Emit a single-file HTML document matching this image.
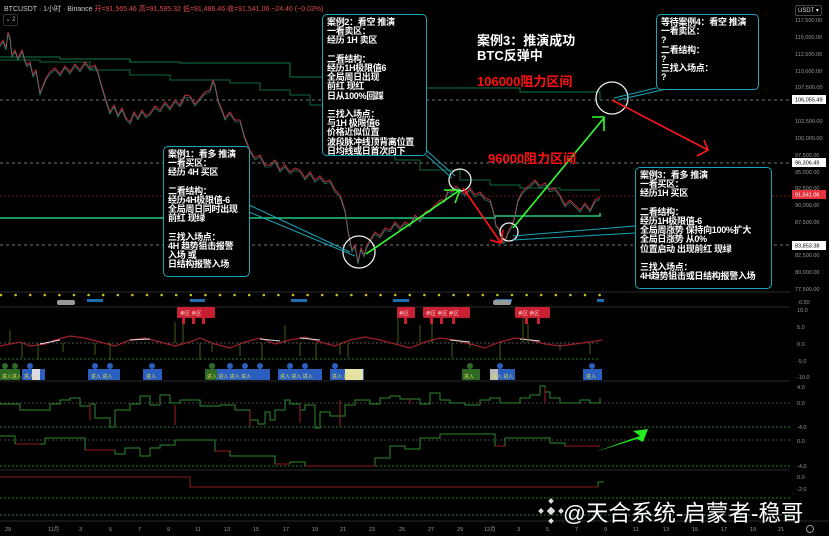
<!DOCTYPE html>
<html><head><meta charset="utf-8">
<style>
html,body{margin:0;padding:0;background:#000;}
body{width:829px;height:536px;overflow:hidden;position:relative;font-family:"Liberation Sans","Noto Sans CJK SC",sans-serif;}
svg{position:absolute;left:0;top:0;}
.box{position:absolute;border:1.5px solid #1aa6b7;border-radius:5px;color:#fff;font-weight:bold;font-size:9px;line-height:9.2px;padding:3px 4px;box-sizing:border-box;background:#000;white-space:nowrap;letter-spacing:-0.3px;overflow:hidden;}
.t{position:absolute;font-weight:bold;white-space:nowrap;}
</style></head><body>
<svg width="829" height="536" viewBox="0 0 829 536" font-family="Liberation Sans, Noto Sans CJK SC, sans-serif">
<g fill="none">
<path d="M0 292H790M0 307H790M0 381H790M0 470H790M0 521H829" stroke="#2a2a2a"/>
<path d="M0 100H790M0 163H790M0 245H790" stroke="#777" stroke-dasharray="3 3"/>
<path d="M0 196H790" stroke="#6a1a1a" stroke-dasharray="2 2"/>
<path d="M0 57H60V59H130V62H180V63H290V77H395V88H520V92H600V100" stroke="#0c7a4a"/>
<path d="M0 60H40V62H90V70H130V75H170V80H230V83H260V90H290V95H310V105H330V115H345V130H360V140H375V150H395V160H420V170H460V180H490V185H520V188H560V190H600V190" stroke="#0c6a40"/>
<path d="M0 218H495V216H600V213" stroke="#22c978" stroke-width="1.6"/>
<path d="M0 45L3 40L6 48L8 32L10 38L12 55L15 50L18 58L22 50L25 60L27 65L30 62L33 75L36 70L40 93L43 85L46 78L50 72L55 68L60 74L65 66L70 72L75 64L80 70L85 62L90 68L95 65L98 72L100 80L103 90L106 100L110 112L114 105L118 115L122 108L126 118L130 122L134 112L138 118L142 110L146 116L150 113L155 106L160 110L165 102L170 108L175 100L180 105L185 95L190 96L195 104L200 98L205 92L210 90L213 80L215 85L218 100L222 110L225 118L230 112L235 120L240 120L244 135L248 145L250 150L255 158L260 155L265 165L270 165L275 160L280 170L285 165L290 172L295 168L300 170L305 178L310 172L315 180L320 176L325 182L330 180L335 190L340 195L345 210L348 230L352 250L355 245L358 262L361 248L364 255L367 245L370 240L375 232L380 236L385 228L390 230L395 222L400 228L405 222L410 225L415 215L420 220L425 212L430 210L435 205L440 200L445 200L448 190L452 192L456 186L460 190L465 194L470 188L475 195L480 192L485 198L490 200L493 210L496 225L500 230L503 242L505 240L508 232L512 225L515 215L518 200L522 192L526 188L530 185L535 180L540 186L545 183L550 190L555 188L560 195L565 205L570 200L575 205L580 210L585 203L590 210L595 200L600 197" stroke="#c02838" stroke-width="1"/>
<path d="M0 47L3 42L6 50L8 34L10 40L12 57L15 52L18 60L22 52L25 62L27 67L30 64L33 77L36 72L40 95L43 87L46 80L50 74L55 70L60 76L65 68L70 74L75 66L80 72L85 64L90 70L95 67L98 74L100 82L103 92L106 102L110 114L114 107L118 117L122 110L126 120L130 124L134 114L138 120L142 112L146 118L150 115L155 108L160 112L165 104L170 110L175 102L180 107L185 97L190 98L195 106L200 100L205 94L210 92L213 82L215 87L218 102L222 112L225 120L230 114L235 122L240 122L244 137L248 147L250 152L255 160L260 157L265 167L270 167L275 162L280 172L285 167L290 174L295 170L300 172L305 180L310 174L315 182L320 178L325 184L330 182L335 192L340 197L345 212L348 232L352 252L355 247L358 264L361 250L364 257L367 247L370 242L375 234L380 238L385 230L390 232L395 224L400 230L405 224L410 227L415 217L420 222L425 214L430 212L435 207L440 202L445 202L448 192L452 194L456 188L460 192L465 196L470 190L475 197L480 194L485 200L490 202L493 212L496 227L500 232L503 244L505 242L508 234L512 227L515 217L518 202L522 194L526 190L530 187L535 182L540 188L545 185L550 192L555 190L560 197L565 207L570 202L575 207L580 212L585 205L590 212L595 202L600 199" stroke="#1f9c8c" stroke-width="0.6"/>
<circle cx="359" cy="252" r="16" stroke="#eee" stroke-width="1.3"/><circle cx="460" cy="180" r="11" stroke="#eee" stroke-width="1.3"/><circle cx="509" cy="232" r="9" stroke="#eee" stroke-width="1.3"/><circle cx="612" cy="98" r="16" stroke="#eee" stroke-width="1.3"/>
<path d="M366 254L460 190M444 190L460 190L455 203M513 228L604 118M592 117L604 117L604 131" stroke="#33ff33" stroke-width="1.6"/>
<path d="M463 188L501 243M490 240L501 243L503 230M612 100L708 150M697 156L708 150L704 140" stroke="#ff1818" stroke-width="1.6"/>
<path d="M249 205L350 252M249 212L355 256M426 150L455 176M426 155L452 178M635 233L513 240M635 226L513 236M656 88L614 98M662 90L618 100" stroke="#1aa6b7"/>
</g>
<g font-size="5.5" fill="#999">
<text x="795" y="22">117,500.00</text><text x="795" y="39">115,000.00</text><text x="795" y="56">112,500.00</text><text x="795" y="73">110,000.00</text><text x="795" y="89">107,500.00</text><text x="795" y="123">102,500.00</text><text x="795" y="140">100,000.00</text><text x="795" y="157">97,500.00</text><text x="795" y="174">95,000.00</text><text x="795" y="190">92,500.00</text><text x="795" y="207">90,000.00</text><text x="795" y="224">87,500.00</text><text x="795" y="257">82,500.00</text><text x="795" y="274">80,000.00</text><text x="795" y="291">77,500.00</text>
</g>
<rect x="792" y="95" width="34" height="9" fill="#fff"/><text x="795" y="101.5" font-size="5.5" fill="#000">106,055.49</text>
<rect x="792" y="158" width="34" height="9" fill="#fff"/><text x="795" y="164.5" font-size="5.5" fill="#000">96,306.49</text>
<rect x="792" y="190" width="34" height="9" fill="#e5323f"/><text x="795" y="196.5" font-size="5.5" fill="#fff">91,541.06</text>
<rect x="792" y="241" width="34" height="9" fill="#fff"/><text x="795" y="247.5" font-size="5.5" fill="#000">83,853.38</text>
<path d="M1 295h0M15.6 295h0M30.2 295h0M44.8 295h0M59.4 295h0M74 295h0M88.6 295h0M103.2 295h0M117.8 295h0M132.4 295h0M147 295h0M161.6 295h0M176.2 295h0M190.8 295h0M205.4 295h0M220 295h0M234.6 295h0M249.2 295h0M263.8 295h0M278.4 295h0M293 295h0M307.6 295h0M322.2 295h0M336.8 295h0M351.4 295h0M366 295h0M380.6 295h0M395.2 295h0M409.8 295h0M424.4 295h0M439 295h0M453.6 295h0M468.2 295h0M482.8 295h0M497.4 295h0M512 295h0M526.6 295h0M541.2 295h0M555.8 295h0M570.4 295h0M585 295h0M599.6 295h0" stroke="#c8c020" stroke-width="2.6" stroke-linecap="round"/>
<g fill="#1d6fb0"><rect x="87" y="299" width="16" height="3"/><rect x="190" y="299" width="15" height="3"/><rect x="291" y="299" width="16" height="3"/><rect x="393" y="299" width="16" height="3"/><rect x="495" y="299" width="17" height="3"/><rect x="597" y="299" width="7" height="3"/></g>
<rect x="57" y="300" width="18" height="5" rx="2" fill="#999"/><rect x="493" y="300" width="18" height="5" rx="2" fill="#999"/>
<text x="797" y="304" font-size="5.5" fill="#999">-0.50</text>
<path d="M0 343H600" stroke="#555" stroke-dasharray="2 2"/><path d="M0 359H600" stroke="#2a7a2a" stroke-dasharray="2 2"/>
<path d="M0 346L20 342L30 346L45 344L55 340L70 336L85 338L100 342L115 346L130 340L145 338L160 342L175 346L190 342L200 338L215 344L230 348L245 342L260 338L275 344L290 340L305 337L320 342L335 346L350 340L365 337L380 340L395 344L410 348L425 342L440 338L455 340L470 344L485 348L500 342L515 338L530 340L545 344L560 346L575 344L590 342L602 340" stroke="#a02028" stroke-width="1.2" fill="none"/>
<path d="M40 344L60 340M130 340L150 339M260 339L280 341M300 338L320 340M450 340L470 342M520 339L540 341" stroke="#ddd" stroke-width="1"/>
<path d="M10 343V330M22 343V358M38 343V360M63 343V352M95 343V355M110 343V360M175 343V322M183 343V316M200 343V360M212 343V352M240 343V356M262 343V360M285 343V325M300 343V356M316 343V360M340 343V355M348 343V358M398 343V316M420 343V325M432 343V318M452 343V358M470 343V348M500 343V360M523 343V318M528 343V324M560 343V350M590 343V354" stroke="#4a6a18" stroke-width="0.9"/>
<g fill="#c82030"><rect x="177" y="307" width="38" height="11" rx="1"/><rect x="397" y="307" width="18" height="11" rx="1"/><rect x="423" y="307" width="47" height="11" rx="1"/><rect x="515" y="307" width="35" height="11" rx="1"/>
<rect x="182" y="318" width="3" height="6"/><rect x="192" y="318" width="3" height="6"/><rect x="202" y="318" width="3" height="6"/><rect x="404" y="318" width="3" height="6"/><rect x="430" y="318" width="3" height="6"/><rect x="440" y="318" width="3" height="6"/><rect x="452" y="318" width="3" height="6"/><rect x="525" y="318" width="3" height="6"/><rect x="537" y="318" width="3" height="6"/></g>
<g font-size="5" fill="#fcc"><text x="180" y="315">卖区 卖区</text><text x="399" y="315">卖区</text><text x="426" y="315">卖区 卖区 卖区</text><text x="518" y="315">卖区 卖区</text></g>
<g fill="#2a5fc0"><rect x="22" y="369" width="23" height="11"/><rect x="88" y="369" width="32" height="11"/><rect x="143" y="369" width="19" height="11"/><rect x="205" y="369" width="65" height="11"/><rect x="278" y="369" width="44" height="11"/><rect x="330" y="369" width="34" height="11"/><rect x="490" y="369" width="25" height="11"/><rect x="583" y="369" width="19" height="11"/>
<circle cx="30" cy="366" r="3"/><circle cx="95" cy="366" r="3"/><circle cx="110" cy="366" r="3"/><circle cx="152" cy="366" r="3"/><circle cx="212" cy="366" r="3"/><circle cx="230" cy="366" r="3"/><circle cx="245" cy="366" r="3"/><circle cx="260" cy="366" r="3"/><circle cx="290" cy="366" r="3"/><circle cx="305" cy="366" r="3"/><circle cx="335" cy="366" r="3"/><circle cx="500" cy="366" r="3"/><circle cx="592" cy="366" r="3"/></g>
<g fill="#2e6a24"><rect x="0" y="369" width="20" height="11"/><rect x="462" y="369" width="18" height="11"/><rect x="205" y="369" width="12" height="11"/><circle cx="5" cy="366" r="3"/><circle cx="15" cy="366" r="3"/><circle cx="470" cy="366" r="3"/><circle cx="212" cy="366" r="3"/></g>
<rect x="32" y="369" width="8" height="11" fill="#ddd"/><rect x="345" y="369" width="18" height="11" fill="#e8e4a8"/><rect x="490" y="369" width="8" height="11" fill="#bbb"/>
<g font-size="5" fill="#dd5"><text x="2" y="378">进入进入</text><text x="24" y="378">进入</text><text x="91" y="378">进入 进入</text><text x="146" y="378">进入</text><text x="207" y="378">进入 进入 进入 进入</text><text x="280" y="378">进入 进入 进入</text><text x="332" y="378">进入 进入</text><text x="464" y="378">进入</text><text x="492" y="378">进入 进入</text><text x="586" y="378">进入</text></g>
<g font-size="5.5" fill="#999"><text x="797" y="312">10.0</text><text x="797" y="329">5.0</text><text x="797" y="346">0.0</text><text x="797" y="363">-5.0</text><text x="797" y="379">-10.0</text></g>
<path d="M0 403H790M0 440H790" stroke="#444" stroke-dasharray="2 2"/><path d="M0 427H790M0 466H790" stroke="#2a7a2a" stroke-dasharray="2 2"/>
<path d="M0 404H20V410H50V404H60V400H70V398H80V406H90V404H95V418H110V427H115V410H130V404H140V396H150V405H160V395H170V403H180V400H200V406H220V405H235V410H250V420H258V424H265V412H270V420H275V410H285V400H290V404H300V410H305V405H315V428H320V412H330V416H345V405H355V400H370V404H380V398H390V396H400V399H420V404H430V393H440V400H450V403H465V405H480V400H490V398H500V403H520V398H530V395H540V386H545V392H550V398H560V403H580V400H590V403H600V398" stroke="#2b8a2b" fill="none"/>
<path d="M90 404V420M175 405V425M250 410V427M300 405V423M340 400V427M410 398V404M545 388V403" stroke="#a02020"/>
<path d="M0 436H15V444H40V444H45V438H85V450H115V454H125V448H140V456H150V448H160V445H175V440H215V451H230V456H275V464H290V462H305V466H375V458H390V446H405V449H420V438H440V434H495V446H505V438H550V443H565V446H600V446" stroke="#2b8a2b" fill="none"/>
<path d="M15 444H40M85 450H115M215 451H230M275 464H290M305 466H375M495 446H505M565 446H600" stroke="#9a1a1a"/>
<path d="M595 452L640 436L633 431L648 429L643 442L637 439Z" fill="#22ee22"/>
<g font-size="5.5" fill="#999"><text x="797" y="389">4.0</text><text x="797" y="405">0.0</text><text x="797" y="429">-4.0</text><text x="797" y="443">0.0</text><text x="797" y="468">-4.0</text></g>
<path d="M0 477H190V487H598" stroke="#8a1a1a" fill="none"/><path d="M598 487V482H604" stroke="#2b8a2b" fill="none"/>
<path d="M0 498H790M0 515H790" stroke="#2a7a2a" stroke-dasharray="2 2"/>
<text x="797" y="479" font-size="5.5" fill="#999">0.0</text><text x="797" y="491" font-size="5.5" fill="#999">-2.0</text>
<g transform="translate(551,511)" fill="#ddd"><rect x="-3" y="-3" width="6" height="6" transform="rotate(45)"/><rect x="-2" y="-12" width="4" height="4" transform="rotate(45 0 -10)"/><rect x="-2" y="8" width="4" height="4" transform="rotate(45 0 10)"/><rect x="-12" y="-2" width="4" height="4" transform="rotate(45 -10 0)"/><rect x="8" y="-2" width="4" height="4" transform="rotate(45 10 0)"/></g>
<g font-size="5.5" fill="#999"><text x="5" y="531">29</text><text x="48" y="531">11月</text><text x="79" y="531">3</text><text x="109" y="531">5</text><text x="138" y="531">7</text><text x="167" y="531">9</text><text x="195" y="531">11</text><text x="224" y="531">13</text><text x="253" y="531">15</text><text x="283" y="531">17</text><text x="312" y="531">19</text><text x="340" y="531">21</text><text x="369" y="531">23</text><text x="399" y="531">25</text><text x="428" y="531">27</text><text x="457" y="531">29</text><text x="484" y="531">12月</text><text x="517" y="531">3</text><text x="546" y="531">5</text><text x="575" y="531">7</text><text x="604" y="531">9</text><text x="633" y="531">11</text><text x="663" y="531">13</text><text x="692" y="531">15</text><text x="721" y="531">17</text><text x="750" y="531">19</text><text x="778" y="531">21</text></g>
<circle cx="810" cy="529" r="3.5" stroke="#999" fill="none"/>
</svg>

<div class="t" style="left:4px;top:4px;font-size:7px;color:#ccc;font-weight:normal">BTCUSDT · 1小时 · Binance <span style="color:#e04a4a">开=91,565.46 高=91,595.32 低=91,486.46 收=91,541.06 −24.40 (−0.03%)</span></div>
<div style="position:absolute;left:3px;top:14px;width:13px;height:10px;border:1px solid #333;border-radius:2px;color:#bbb;font-size:6px;text-align:center;line-height:10px">⌄ 2</div>
<div style="position:absolute;left:795px;top:5px;width:27px;height:11px;border:1px solid #444;border-radius:2px;color:#ddd;font-size:6px;line-height:11px;padding-left:2px;box-sizing:border-box">USDT ▾</div>

<div class="box" style="left:322px;top:14px;width:105px;height:142px">案例2：看空 推演<br>一看卖区：<br>经历 1H 卖区<br><br>二看结构：<br>经历1H极限值6<br>全局周日出现<br>前红 现红<br>日从100%回踩<br><br>三找入场点：<br>与1H 极限值6<br>价格近似位置<br>波段脉冲线顶背离位置<br>日均线或日首次向下</div>
<div class="box" style="left:163px;top:146px;width:87px;height:131px">案例1：看多 推演<br>一看买区：<br>经历 4H 买区<br><br>二看结构：<br>经历4H极限值-6<br>全局周日同时出现<br>前红 现绿<br><br>三找入场点：<br>4H 趋势狙击报警<br>入场 或<br>日结构报警入场</div>
<div class="box" style="left:656px;top:14px;width:103px;height:76px">等待案例4：看空 推演<br>一看卖区：<br>?<br>二看结构：<br>?<br>三找入场点：<br>?</div>
<div class="box" style="left:635px;top:167px;width:137px;height:122px">案例3：看多 推演<br>一看买区：<br>经历1H 买区<br><br>二看结构：<br>经历1H极限值-6<br>全局周涨势 保持向100%扩大<br>全局日涨势 从0%<br>位置启动 出现前红 现绿<br><br>三找入场点：<br>4H趋势狙击或日结构报警入场</div>

<div class="t" style="left:477px;top:33px;font-size:13px;color:#fff;line-height:15px">案例3：推演成功<br>BTC反弹中</div>
<div class="t" style="left:477px;top:71px;font-size:13px;color:#ff1010">106000阻力区间</div>
<div class="t" style="left:488px;top:148px;font-size:13px;color:#ff1010">96000阻力区间</div>
<div class="t" style="left:563px;top:496px;font-size:22.5px;color:#fff;font-weight:normal">@天合系统-启蒙者-稳哥</div>
</body></html>
